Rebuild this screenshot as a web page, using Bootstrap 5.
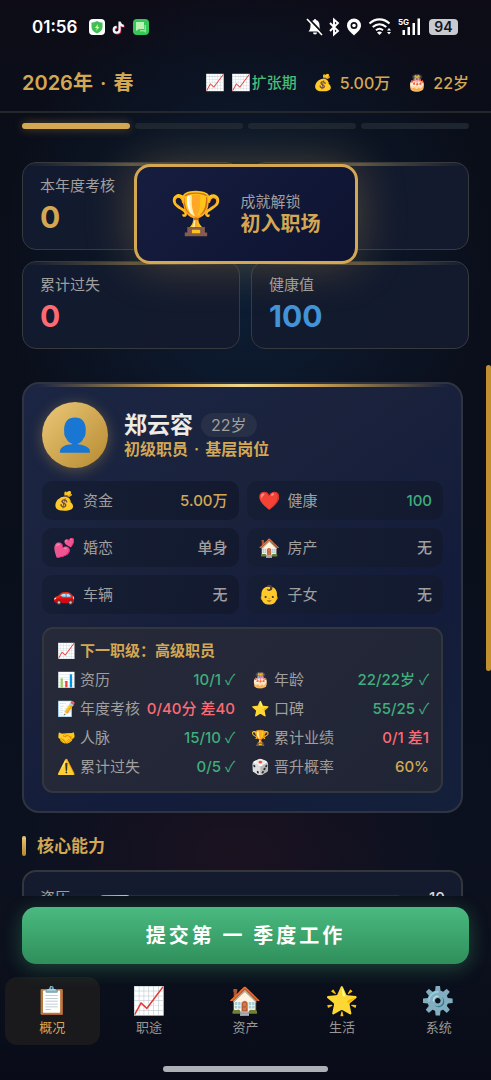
<!DOCTYPE html>
<html lang="zh-CN">
<head>
<meta charset="utf-8">
<meta name="viewport" content="width=device-width, initial-scale=1">
<title>职场人生</title>
<link href="https://cdn.jsdelivr.net/npm/bootstrap@5.3.0/dist/css/bootstrap.min.css" rel="stylesheet">
<style>
:root{--gold:#d4a853;--muted:#a09f9e;--green:#48bb78;--teal:#3fae7c;--red:#fc6b74;--gutter:22px}
body{font-family:Inter,"Noto Sans CJK SC",sans-serif;font-size:15px;line-height:20px;color:var(--muted);background:#0a0d18}
.app{height:100vh;overflow:hidden;background:
 radial-gradient(ellipse 50% 26% at 50% 24%,rgba(15,42,74,.6),transparent),
 radial-gradient(ellipse 42% 14% at 48% 79%,rgba(60,20,32,.32),transparent),
 linear-gradient(180deg,#0d0c17 0%,#0a0e19 12%,#0a0f1c 50%,#0c1120 80%,#0a0d1a 100%)}
.gold{color:var(--gold)}.teal{color:var(--teal)}.green{color:var(--green)}.red{color:var(--red)}
.emo{font-family:"Noto Color Emoji",sans-serif;text-align:center;flex:none;line-height:1;white-space:nowrap}
.tick{font-family:var(--bs-font-sans-serif);line-height:1}
.dot{margin:0 2px}
.status{height:54px;padding:0 33px 0 32px;color:#fff}
.clock{font-size:17px;font-weight:600;margin-right:12px}
.battery{background:#c9cad0;color:#14141e;border-radius:4px;font-size:14px;font-weight:600;line-height:16px;width:29px;text-align:center}
.topbar{height:59px;padding:0 var(--gutter);border-bottom:2px solid #24282a}
.season{font-size:20px;line-height:24px;font-weight:600;margin:0}
.topstats{gap:17px}
.topstat{font-size:16px;font-weight:500;gap:6px}
.topstat .emo{font-size:16px;width:20px}
.topstat .trend{font-size:15px}
.quarters{padding:10px var(--gutter) 0;gap:5px}
.quarter{height:6px;border-radius:3px;background:#1d2530}
.quarter.done{background:var(--gold);box-shadow:0 0 10px rgba(212,168,83,.4)}
.stats{padding:33px var(--gutter) 16px;display:grid;grid-template-columns:1fr 1fr;gap:11px}
.stat{position:relative;height:88px;padding:13px 17px;border:1px solid #37393c;border-radius:14px;background:linear-gradient(135deg,#111a2e,#141a2e);overflow:hidden}
.stat::before{content:"";position:absolute;inset:0 0 auto;height:3px;background:linear-gradient(90deg,transparent,#5c5340,transparent)}
.stat b{display:block;font-size:30px;line-height:34px;font-weight:700;margin-top:4px}
.health{color:#4294d8}
.toast-box{position:absolute;top:35px;left:50%;transform:translateX(-50%);width:224px;height:100px;border:3px solid var(--gold);border-radius:16px;background:linear-gradient(135deg,#161d3f,#0d1330);box-shadow:0 0 48px rgba(212,168,83,.32);padding:0 30px 0 34px;gap:18px;z-index:2}
.toast-box .emo{font-size:42px;width:52px}
.toast-box strong{font-size:20px;line-height:24px;font-weight:700}
.pane{min-height:0;position:relative;overflow:hidden}
.pane-body{padding:17px 28px 0 var(--gutter)}
.thumb{position:absolute;top:0;right:0;width:5px;height:306px;border-radius:3px;background:#c2902f}
.profile{position:relative;border:2px solid #303440;border-radius:17px;background:linear-gradient(145deg,#1b2644 0%,#1a223c 35%,#131c3a 65%,#14203a 100%);padding:18px;overflow:hidden}
.profile::before{content:"";position:absolute;inset:-1px 0 auto;height:4px;background:linear-gradient(90deg,transparent 3%,var(--gold) 35%,#f0d88c 50%,var(--gold) 65%,transparent 97%)}
.avatar{width:66px;height:66px;border-radius:50%;background:linear-gradient(135deg,#ecc878,#b68a30);box-shadow:0 2px 14px rgba(212,168,83,.35)}
.avatar .emo{font-size:32px}
.who{font-size:23px;line-height:27px;font-weight:700;color:#eeeae4;margin:0}
.age{font-size:16px;line-height:24px;padding:0 10px;border-radius:12px;background:#273046}
.role{font-size:16px;line-height:20px;font-weight:600}
.facts{display:grid;grid-template-columns:1fr 1fr;gap:8px;margin-top:13px}
.fact{height:39px;border-radius:10px;background:linear-gradient(100deg,#151e34,#131a30);padding:0 11px 0 10px;gap:5px}
.fact .emo{font-size:18px;width:26px}
.fact b,.need b{font-weight:500;margin-left:auto;white-space:nowrap}
.promo{margin-top:13px;border:2px solid #33373d;border-radius:11px;background:linear-gradient(135deg,#262938,#202536);padding:12px 12px 14px 13px}
.promo .emo{font-size:15px;width:19px}
.promo h3{font-size:15px;line-height:20px;font-weight:600;margin:0 0 9px}
.needs{display:grid;grid-template-columns:1fr 1fr;gap:9px 16px}
.need{height:20px}
.need,.promo h3{gap:4px}
.section-title{font-size:17px;line-height:20px;font-weight:600;margin:23px 0 14px;gap:11px}
.section-title::before{content:"";width:4px;height:20px;border-radius:2px;background:linear-gradient(#e8c878,#b8862e)}
.skills{border:2px solid #33363a;border-radius:14px;background:#141b2f;padding:16px}
.skill{gap:16px}
.skill .meter{height:7px;border-radius:4px;background:#242b3b;margin-left:14px}
.skill .meter span{display:block;height:100%;border-radius:4px;background:linear-gradient(90deg,#b8862e,#e8c878)}
.skill b{width:28px;font-weight:500;color:#dcdad6;text-align:right}
.submit-row{position:relative;z-index:1;padding:11px var(--gutter) 0;background:#0c111d}
.submit{height:57px;border:0;border-radius:14px;color:#fff;font-size:20px;font-weight:700;letter-spacing:3px;background:linear-gradient(#4aba80,#2f8f5b);box-shadow:0 4px 20px rgba(72,187,120,.32)}
.tabs{height:116px;padding:13px 4px 0;background:linear-gradient(#0b101c,#090c18)}
.tabs a{height:68px;margin:0 1px;border-radius:12px;color:#9a9894;text-decoration:none;font-size:13px;line-height:18px;padding-top:9px;gap:2px}
.tabs a.active{background:#1a1a1c;color:var(--gold)}
.tabs .emo{font-size:27px;line-height:30px}
.home{width:165px;height:6px;border-radius:3px;background:#adb0b6;margin:21px auto 0}
</style>
</head>
<body>
<div class="app d-flex flex-column">
  <div class="status d-flex align-items-center flex-shrink-0">
    <span class="clock">01:56</span>
    <svg width="60" height="18" viewBox="0 0 60 18" aria-hidden="true">
      <rect x="0" y="1" width="16" height="16" rx="4" fill="#fff"/>
      <path d="M8 3c2 1 3.500 1.500 5.500 1.500V9c0 3-2 5-5.500 6.500C4.500 14 2.500 12 2.500 9V4.500C4.500 4.500 6 4 8 3z" fill="#3fbf55"/>
      <path d="M9 6 6 10h2l-1 3 3.500-4H8.500z" fill="#e8ff9a"/>
      <g fill="none" stroke-width="2.200"><path d="M30.500 3.500v8.200a2.900 2.900 0 1 1-2.900-2.900M30.500 4c.4 2.300 2 3.600 4.300 3.800" stroke="#ef2d58" transform="translate(.7 .7)"/><path d="M30.500 3.500v8.200a2.900 2.900 0 1 1-2.900-2.900M30.500 4c.4 2.300 2 3.600 4.300 3.800" stroke="#eaf7fb"/></g>
      <rect x="44" y="1" width="16" height="16" rx="4" fill="#35c759"/>
      <path d="M47 4h8v7h-5l-3 2z" fill="#b9f2b4"/><path d="M51 12h4.500V7H57v8l-2-1.500h-4z" fill="#8be78d"/>
    </svg>
    <svg class="ms-auto" width="115" height="20" viewBox="0 0 115 20" fill="#fff" aria-hidden="true">
      <path d="M2.500 14.500c1.500-1.500 2-3 2-6.200 0-3 1.800-5 3.700-5.300V2h1.600v1c2.300.4 3.700 2.300 3.700 5.300 0 3.200.6 4.700 2 6.200zM7 15.600h4a2 2 0 0 1-4 0z"/><path d="M2.500 1.500 17.500 17" stroke="#0d0c17" stroke-width="1.800"/><path d="M1 2 16 18" stroke="#fff" stroke-width="1.600"/>
      <path d="m24 6 8 8-4 3.500v-15L32 6l-8 8" fill="none" stroke="#fff" stroke-width="1.900"/>
      <path fill-rule="evenodd" d="M48 1.500a7 7 0 0 1 7 7c0 4-4 7-7 10-3-3-7-6-7-10a7 7 0 0 1 7-7zm0 3.500a3.500 3.500 0 1 0 0 7 3.500 3.500 0 0 0 0-7z"/><circle cx="48" cy="8.500" r="1.800"/>
      <g fill="none" stroke="#fff" stroke-width="2.100"><path d="M63.500 6.500c6-5.500 14-5.500 20 0M66.700 10c4.200-3.600 9.400-3.600 13.600 0M70 13.200c2.200-1.800 4.800-1.800 7 0"/></g><path d="M71 15.500c1.500-1.200 3.500-1.200 5 0L73.500 18z"/><path d="m81 13.500 2-2.500 2 2.500zM81 15l2 2.500 2-2.500z"/>
      <text x="92" y="7.500" font-size="8" font-weight="700" font-family="Inter, sans-serif">5G</text>
      <rect x="96.500" y="13" width="2.500" height="5"/><rect x="101.500" y="10" width="2.500" height="8"/><rect x="106.500" y="6" width="2.500" height="12"/><rect x="111.500" y="1.500" width="2.500" height="16.500"/>
    </svg>
    <span class="battery ms-2">94</span>
  </div>

  <header class="topbar d-flex align-items-center justify-content-between flex-shrink-0">
    <h1 class="season gold">2026年 <span class="dot">·</span> 春</h1>
    <div class="topstats d-flex gold">
      <span class="topstat d-flex align-items-center"><span class="emo">📈</span><span class="trend green d-flex align-items-center"><span class="emo">📈</span>扩张期</span></span>
      <span class="topstat d-flex align-items-center"><span class="emo">💰</span>5.00万</span>
      <span class="topstat d-flex align-items-center"><span class="emo">🎂</span>22岁</span>
    </div>
  </header>

  <div class="quarters d-flex flex-shrink-0">
    <div class="quarter done flex-fill"></div><div class="quarter flex-fill"></div><div class="quarter flex-fill"></div><div class="quarter flex-fill"></div>
  </div>

  <div class="position-relative flex-shrink-0">
    <div class="stats">
      <div class="stat">本年度考核<b class="gold">0</b></div>
      <div class="stat"></div>
      <div class="stat">累计过失<b class="red">0</b></div>
      <div class="stat">健康值<b class="health">100</b></div>
    </div>
    <div class="toast-box d-flex align-items-center" role="status">
      <span class="emo">🏆</span>
      <div class="text-nowrap"><div>成就解锁</div><strong class="gold d-block">初入职场</strong></div>
    </div>
  </div>

  <main class="pane flex-fill">
    <div class="pane-body">
      <section class="profile">
        <div class="d-flex align-items-center gap-3">
          <div class="avatar d-flex align-items-center justify-content-center flex-shrink-0"><span class="emo">👤</span></div>
          <div>
            <div class="d-flex align-items-center gap-2"><h2 class="who">郑云容</h2><span class="age">22岁</span></div>
            <div class="role gold">初级职员 <span class="dot">·</span> 基层岗位</div>
          </div>
        </div>
        <div class="facts">
          <div class="fact d-flex align-items-center"><span class="emo">💰</span>资金<b class="gold">5.00万</b></div>
          <div class="fact d-flex align-items-center"><span class="emo">❤️</span>健康<b class="teal">100</b></div>
          <div class="fact d-flex align-items-center"><span class="emo">💕</span>婚恋<b>单身</b></div>
          <div class="fact d-flex align-items-center"><span class="emo">🏠</span>房产<b>无</b></div>
          <div class="fact d-flex align-items-center"><span class="emo">🚗</span>车辆<b>无</b></div>
          <div class="fact d-flex align-items-center"><span class="emo">👶</span>子女<b>无</b></div>
        </div>
        <div class="promo">
          <h3 class="gold d-flex align-items-center"><span class="emo">📈</span>下一职级：高级职员</h3>
          <div class="needs">
            <div class="need d-flex align-items-center"><span class="emo">📊</span>资历<b class="teal">10/1 <span class="tick">✓</span></b></div>
            <div class="need d-flex align-items-center"><span class="emo">🎂</span>年龄<b class="teal">22/22岁 <span class="tick">✓</span></b></div>
            <div class="need d-flex align-items-center"><span class="emo">📝</span>年度考核<b class="red">0/40分 差40</b></div>
            <div class="need d-flex align-items-center"><span class="emo">⭐</span>口碑<b class="teal">55/25 <span class="tick">✓</span></b></div>
            <div class="need d-flex align-items-center"><span class="emo">🤝</span>人脉<b class="teal">15/10 <span class="tick">✓</span></b></div>
            <div class="need d-flex align-items-center"><span class="emo">🏆</span>累计业绩<b class="red">0/1 差1</b></div>
            <div class="need d-flex align-items-center"><span class="emo">⚠️</span>累计过失<b class="teal">0/5 <span class="tick">✓</span></b></div>
            <div class="need d-flex align-items-center"><span class="emo">🎲</span>晋升概率<b class="gold">60%</b></div>
          </div>
        </div>
      </section>
      <h2 class="section-title gold d-flex align-items-center">核心能力</h2>
      <section class="skills">
        <div class="skill d-flex align-items-center">资历<div class="meter flex-fill"><span style="width:10%"></span></div><b>10</b></div>
      </section>
    </div>
    <div class="thumb"></div>
  </main>

  <div class="submit-row flex-shrink-0">
    <button type="button" class="submit d-block w-100">提交第 一 季度工作</button>
  </div>
  <nav class="tabs flex-shrink-0" aria-label="主导航">
    <div class="row row-cols-5 g-0">
      <div class="col"><a href="#" class="active d-flex flex-column align-items-center" aria-current="page"><span class="emo">📋</span>概况</a></div>
      <div class="col"><a href="#" class="d-flex flex-column align-items-center"><span class="emo">📈</span>职途</a></div>
      <div class="col"><a href="#" class="d-flex flex-column align-items-center"><span class="emo">🏠</span>资产</a></div>
      <div class="col"><a href="#" class="d-flex flex-column align-items-center"><span class="emo">🌟</span>生活</a></div>
      <div class="col"><a href="#" class="d-flex flex-column align-items-center"><span class="emo">⚙️</span>系统</a></div>
    </div>
    <div class="home"></div>
  </nav>
</div>
<script src="https://cdn.jsdelivr.net/npm/bootstrap@5.3.0/dist/js/bootstrap.bundle.min.js"></script>
</body>
</html>
